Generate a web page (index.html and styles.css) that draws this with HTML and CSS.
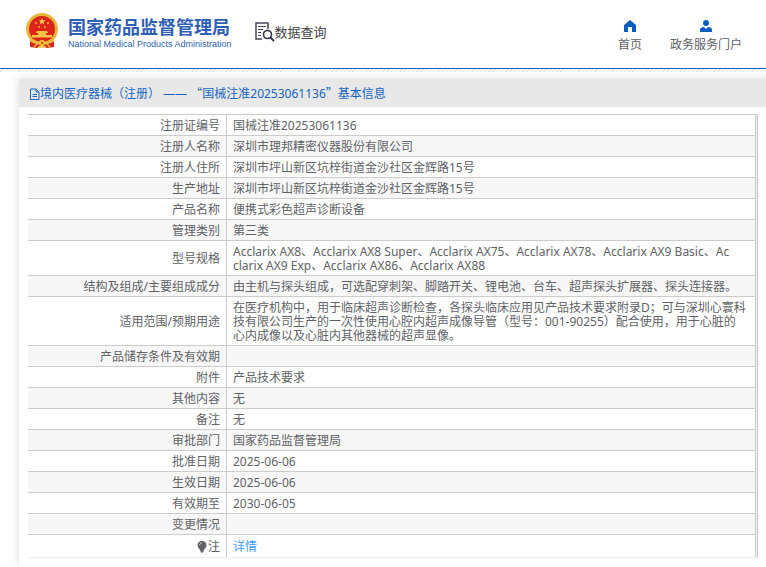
FILE: index.html
```html
<!DOCTYPE html>
<html lang="zh-CN">

<head>
  <meta charset="UTF-8">
  <title>国家药品监督管理局 数据查询</title>
  <link rel="stylesheet" href="styles.css">
</head>

<body>
  <header class="header">
    <a class="logo" href="#">
      <svg class="emblem" viewBox="0 0 34 36" aria-hidden="true">
        <path d="M5 25 L29 25 L29 34 L22 35 L17 32 L12 35 L5 34 Z" fill="#d9251c" />
        <circle cx="17" cy="16" r="16" fill="#e9b63a" />
        <circle cx="17" cy="16" r="13" fill="#dc2418" />
        <path d="M17 5 l1 2.300 2.500 .1 -2 1.600 .8 2.500 -2.300 -1.500 -2.300 1.500 .8 -2.500 -2 -1.600 2.500 -.1 z" fill="#f5cf45" />
        <circle cx="11" cy="10" r="1" fill="#f0b93a" />
        <circle cx="23" cy="10" r="1" fill="#f0b93a" />
        <circle cx="14" cy="14" r="1" fill="#f0b93a" />
        <circle cx="20" cy="14" r="1" fill="#f0b93a" />
        <path d="M12 18 h10 l1 2 h-12 z M13 20 h8 v2 h6 v3 h-20 v-3 h6 z" fill="#f3c648" />
        <path d="M7 25 h20" stroke="#dc2418" />
        <path d="M5 27 Q11 32 17 28 Q23 32 29 27" fill="none" stroke="#f0bd3d" stroke-width="2" />
        <circle cx="17" cy="30" r="3" fill="#f0bd3d" />
        <circle cx="17" cy="30" r="1" fill="#c9301c" />
        <path d="M9 34 l3 -3 M25 34 l-3 -3 M13 34 h8" stroke="#f0bd3d" stroke-width="1.500" />
      </svg>
      <span class="logo-text">
        <span class="logo-cn">国家药品监督管理局</span>
        <span class="logo-en">National Medical Products Administration</span>
      </span>
    </a>
    <a class="search-link" href="#">
      <svg class="search-icon" viewBox="0 0 20 20" aria-hidden="true">
        <path d="M7 17 H1 V1 H13 V7" fill="none" stroke="#45455a" stroke-width="1.500" />
        <path d="M3 4.500 h8 M3 7.500 h5 M3 10.500 h3 M3 13.500 h3" stroke="#45455a" />
        <circle cx="12.500" cy="12.500" r="4" fill="#fff" stroke="#33334a" stroke-width="1.600" />
        <path d="M15.500 15.500 L19 19" stroke="#33334a" stroke-width="2" />
      </svg>
      <span>数据查询</span>
    </a>
    <nav class="nav">
      <a href="#">
        <svg viewBox="0 0 12 12" aria-hidden="true">
          <path d="M6 0 L12 5 V12 H8 V7 H4 V12 H0 V5 Z" fill="#0a5ec2" />
        </svg>
        <span>首页</span>
      </a>
      <a href="#">
        <svg viewBox="0 0 12 12" aria-hidden="true">
          <circle cx="6" cy="3" r="3" fill="#0a5ec2" />
          <path d="M0 12 V10 Q0 7 4 7 L6 9 L8 7 Q12 7 12 10 V12 Z" fill="#0a5ec2" />
        </svg>
        <span>政务服务门户</span>
      </a>
    </nav>
  </header>
  <div class="hatch"></div>

  <main class="card">
    <h1 class="card-title">
      <svg class="doc-icon" viewBox="0 0 11 12" aria-hidden="true">
        <path d="M1.500 1 H7 L10 4 V11.500 H1.500 Z M7 1 V4 H10 M3.500 6.500 H8 M3.500 8.500 H8" fill="none" stroke="#1565c0" />
      </svg>
      <span>境内医疗器械（注册） —— <span class="cjk">“</span>国械注准20253061136<span class="cjk">”</span>基本信息</span>
    </h1>
    <div class="table-wrap">
      <table class="info">
        <tbody>
          <tr><th scope="row">注册证编号</th><td>国械注准20253061136</td></tr>
          <tr><th scope="row">注册人名称</th><td>深圳市理邦精密仪器股份有限公司</td></tr>
          <tr><th scope="row">注册人住所</th><td>深圳市坪山新区坑梓街道金沙社区金辉路15号</td></tr>
          <tr><th scope="row">生产地址</th><td>深圳市坪山新区坑梓街道金沙社区金辉路15号</td></tr>
          <tr><th scope="row">产品名称</th><td>便携式彩色超声诊断设备</td></tr>
          <tr><th scope="row">管理类别</th><td>第三类</td></tr>
          <tr><th scope="row">型号规格</th><td class="models">Acclarix AX8、Acclarix AX8 Super、Acclarix AX75、Acclarix AX78、Acclarix AX9 Basic、Ac
clarix AX9 Exp、Acclarix AX86、Acclarix AX88</td></tr>
          <tr><th scope="row">结构及组成/主要组成成分</th><td>由主机与探头组成，可选配穿刺架、脚踏开关、锂电池、台车、超声探头扩展器、探头连接器。</td></tr>
          <tr><th scope="row">适用范围/预期用途</th><td>在医疗机构中，用于临床超声诊断检查，各探头临床应用见产品技术要求附录D；可与深圳心寰科技有限公司生产的一次性使用心腔内超声成像导管（型号：001-90255）配合使用，用于心脏的心内成像以及心脏内其他器械的超声显像。</td></tr>
          <tr><th scope="row">产品储存条件及有效期</th><td></td></tr>
          <tr><th scope="row">附件</th><td>产品技术要求</td></tr>
          <tr><th scope="row">其他内容</th><td>无</td></tr>
          <tr><th scope="row">备注</th><td>无</td></tr>
          <tr><th scope="row">审批部门</th><td>国家药品监督管理局</td></tr>
          <tr><th scope="row">批准日期</th><td>2025-06-06</td></tr>
          <tr><th scope="row">生效日期</th><td>2025-06-06</td></tr>
          <tr><th scope="row">有效期至</th><td>2030-06-05</td></tr>
          <tr><th scope="row">变更情况</th><td></td></tr>
          <tr class="note">
            <th scope="row">
              <svg class="bulb" viewBox="0 0 10 12" aria-hidden="true">
                <path d="M5 0 C8 0 9.500 2 9.500 4.200 C9.500 6.500 7.500 7.500 7 9 H3 C2.500 7.500 .5 6.500 .5 4.200 C.5 2 2 0 5 0 Z M3 9 H7 L6 11.500 H4 Z" fill="#606266" />
                <path d="M2.500 4 Q2.500 2 4.500 2" fill="none" stroke="#ccc" />
              </svg>注
            </th>
            <td><a href="#">详情</a></td>
          </tr>
        </tbody>
      </table>
    </div>
  </main>
</body>

</html>
```
FILE: styles.css
```css
* {
  box-sizing: border-box;
}

body {
  margin: 0;
  background-color: #fff;
  color: #606266;
  font-family: "Noto Sans", "Noto Sans CJK SC", sans-serif;
  font-size: 12px;
  line-height: 14px;
  overflow-x: hidden;
}

a {
  color: inherit;
  text-decoration: none;
}

.header {
  display: flex;
  align-items: flex-start;
  height: 69px;
  padding: 13px 24px 0 25px;
  border-bottom: 1px solid #0a5ec2;
}

.logo {
  display: flex;
  gap: 9px;
  color: #2f5fb3;
}

.emblem {
  width: 34px;
  height: 36px;
}

.logo-text {
  display: flex;
  flex-direction: column;
  padding-top: 3px;
}

.logo-cn {
  font-family: "Noto Sans CJK SC", sans-serif;
  font-size: 18px;
  font-weight: bold;
  line-height: 20px;
}

.logo-en {
  font-family: "Liberation Sans", Arial, sans-serif;
  font-size: 9px;
  line-height: 16px;
  white-space: nowrap;
}

.search-link {
  display: flex;
  align-items: center;
  margin: 9px 0 0 23px;
  color: #444;
  font-size: 13px;
  line-height: 20px;
}

.search-icon {
  width: 20px;
  height: 20px;
}

.nav {
  display: flex;
  gap: 28px;
  margin-left: auto;
  padding-top: 7px;
}

.nav a {
  display: flex;
  flex-direction: column;
  align-items: center;
  gap: 6px;
}

.nav svg {
  width: 12px;
  height: 12px;
}

.hatch {
  height: 3px;
  background: repeating-linear-gradient(135deg, #fff 0 2px, #e4e4e4 2px 3px);
}

.card {
  margin: 7px -10px 0 19px;
  background-color: #fff;
  box-shadow: 0 0 10px rgba(0, 0, 0, 0.15);
}

.card-title {
  display: flex;
  align-items: center;
  height: 28px;
  margin: 0;
  padding: 1px 0 0 10px;
  background-color: #e8e8e8;
  color: #1565c0;
  font-size: 12px;
  font-weight: normal;
}

.cjk {
  font-family: "Noto Sans CJK SC", sans-serif;
}

.doc-icon {
  width: 11px;
  height: 12px;
}

.table-wrap {
  margin: 7px 18px 0 9px;
  padding-bottom: 8px;
}

.info {
  width: 100%;
  border-collapse: separate;
  border-spacing: 0;
  border-top: 1px solid #ccc;
  border-right: 1px solid #ccc;
  border-bottom: 1px solid #ebeef5;
  padding-right: 1px;
  background-color: #ebeef5;
}

.info th,
.info td {
  height: 21px;
  padding: 4px 8px 2px 6px;
  border-right: 1px solid #ccc;
  border-bottom: 1px solid #ccc;
  background-color: #fff;
  font-weight: normal;
  word-break: break-all;
}

.info th {
  width: 199px;
  padding-right: 6px;
  text-align: right;
}

.info td {
  text-align: left;
}

.info .models {
  white-space: pre-line;
}

.info tr:nth-child(even) th,
.info tr:nth-child(even) td {
  background-color: #f7f7f7;
}

.info .note th,
.info .note td {
  height: 22px;
  border-bottom: none;
}

.info .note a {
  color: #409eff;
}

.bulb {
  width: 10px;
  height: 12px;
  margin-right: 1px;
  vertical-align: -2px;
}
```
